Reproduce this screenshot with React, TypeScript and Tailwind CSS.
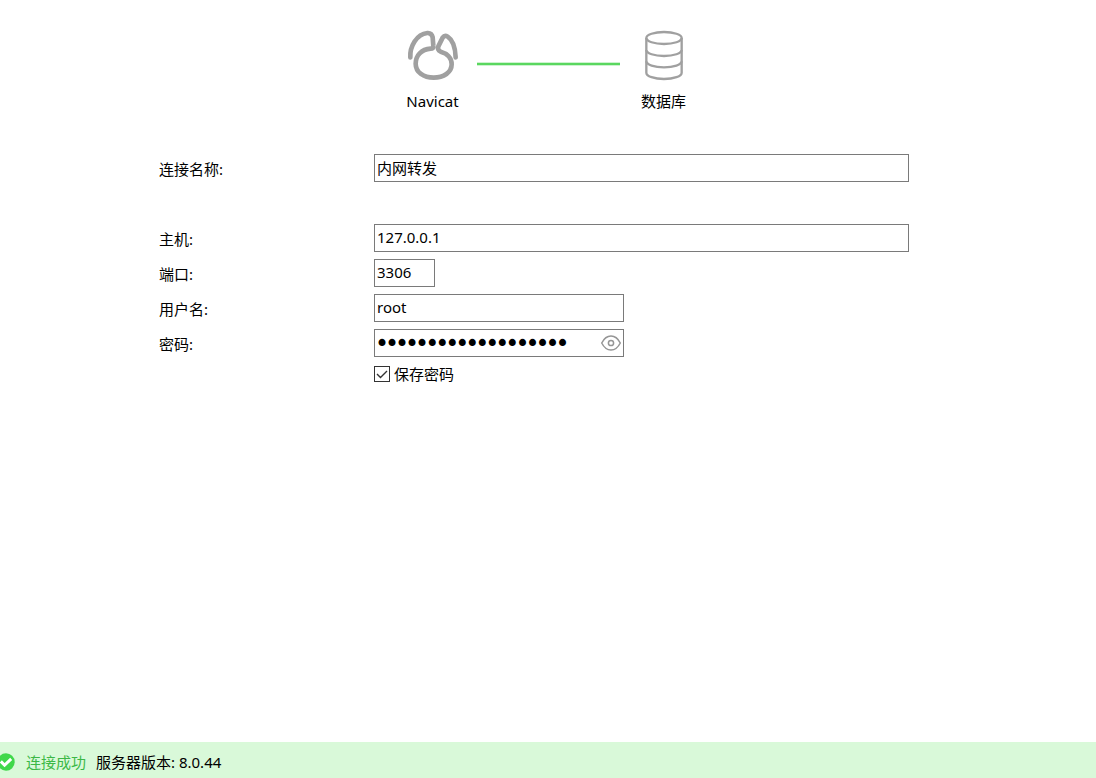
import React, { useState } from "react";

interface ConnectionData {
  nombre: string;
  host: string;
  puerto: string;
  usuario: string;
  password: string;
}

const NavicatIcon: React.FC = () => (
  <svg
    viewBox="30 27 162 162"
    className="h-[54px] w-[54px]"
    fill="none"
    stroke="#a0a0a0"
    strokeWidth="14"
    strokeLinecap="round"
    strokeLinejoin="round"
    aria-hidden="true"
  >
    <path d="M43 112C41 80 62 42 94 39Q107 38 110 52L112 78Q113 86 104 86C76 88 59 106 59 131C59 157 83 173 113 173C143 173 167 157 167 133C167 113 152 100 134 95Q123 90 127 79L140 53Q146 44 155 50C172 61 178 85 179 112" />
  </svg>
);

const DatabaseIcon: React.FC = () => (
  <svg viewBox="82 27 162 162" className="h-[54px] w-[54px]" fill="none" stroke="#a0a0a0" strokeWidth="7" aria-hidden="true">
    <ellipse cx="163" cy="54" rx="53" ry="18" />
    <path d="M110 54V158C110 169 134 177 163 177S216 169 216 158V54" />
    <path d="M110 90C110 100 134 108 163 108S216 100 216 90" />
    <path d="M110 124C110 134 134 142 163 142S216 134 216 124" />
  </svg>
);

const EyeIcon: React.FC = () => (
  <svg viewBox="0 0 20 16" className="h-4 w-5" fill="none" stroke="#959595" strokeWidth="1.5" aria-hidden="true">
    <path d="M0.7 8C3 3.5 6 1 10 1S17 3.5 19.3 8C17 12.5 14 15 10 15S3 12.5 0.7 8Z" />
    <circle cx="10" cy="8" r="2.6" />
  </svg>
);

const inputClass = "h-7 border border-[#7a7a7a] bg-white px-[2px] pb-[2px] outline-none";
const labelClass = "flex h-7 items-center pt-[2px]";

export default function App() {
  const [formData, setFormData] = useState<ConnectionData>({
    nombre: "内网转发",
    host: "127.0.0.1",
    puerto: "3306",
    usuario: "root",
    password: "1234567890123456789",
  });
  const [savePassword, setSavePassword] = useState(true);
  const [showPassword, setShowPassword] = useState(false);

  const handleChange = (event: React.ChangeEvent<HTMLInputElement>) => {
    setFormData({ ...formData, [event.target.name]: event.target.value });
  };

  return (
    <div className="flex min-h-screen flex-col bg-white font-['Noto_Sans','Noto_Sans_CJK_SC',sans-serif] text-[15px] leading-6 text-black">
      <header className="flex justify-center gap-4 pt-[29px]">
        <div className="flex w-14 flex-col items-center gap-[6px]">
          <NavicatIcon />
          <span>Navicat</span>
        </div>
        <div className="mt-[33px] h-1 w-[143px] border-y border-[#cdf3cf] bg-[#5ad75f]" />
        <div className="flex w-14 flex-col items-center gap-[6px]">
          <DatabaseIcon />
          <span>数据库</span>
        </div>
      </header>

      <main className="flex-1 pt-[41px] pr-[187px] pl-[159px]">
        <form className="grid grid-cols-[215px_1fr] gap-y-[7px]" onSubmit={(e) => e.preventDefault()}>
          <label htmlFor="nombre" className={labelClass}>连接名称:</label>
          <input id="nombre" name="nombre" className={`${inputClass} mb-[35px] w-full`} value={formData.nombre} onChange={handleChange} />

          <label htmlFor="host" className={labelClass}>主机:</label>
          <input id="host" name="host" className={`${inputClass} w-full`} value={formData.host} onChange={handleChange} />

          <label htmlFor="puerto" className={labelClass}>端口:</label>
          <input id="puerto" name="puerto" className={`${inputClass} w-[61px]`} value={formData.puerto} onChange={handleChange} />

          <label htmlFor="usuario" className={labelClass}>用户名:</label>
          <input id="usuario" name="usuario" className={`${inputClass} w-[250px]`} value={formData.usuario} onChange={handleChange} />

          <label htmlFor="password" className={labelClass}>密码:</label>
          <div className="flex h-7 w-[250px] items-center border border-[#7a7a7a] pr-[2px]">
            <input
              id="password"
              name="password"
              type={showPassword ? "text" : "password"}
              className="min-w-0 flex-1 bg-white pl-[2px] font-['DejaVu_Sans',sans-serif] text-[17px] outline-none [-webkit-text-stroke:2px_black]"
              value={formData.password}
              onChange={handleChange}
            />
            <button type="button" aria-label="显示密码" onClick={() => setShowPassword(!showPassword)}>
              <EyeIcon />
            </button>
          </div>

          <label className="col-start-2 flex items-center gap-1 leading-5">
            <span className="relative flex h-4 w-4">
              <input
                type="checkbox"
                className="h-4 w-4 appearance-none border border-[#333333] bg-white"
                checked={savePassword}
                onChange={(e) => setSavePassword(e.target.checked)}
              />
              {savePassword && (
                <svg viewBox="0 0 16 16" className="pointer-events-none absolute inset-0" fill="none" stroke="#333333" strokeWidth="1.4" aria-hidden="true">
                  <path d="M3 8L6.5 11.5L13 5" />
                </svg>
              )}
            </span>
            保存密码
          </label>
        </form>
      </main>

      <footer className="flex h-9 items-center bg-[#d9f9d9] pt-1">
        <svg viewBox="0 0 18 18" className="-ml-[3px] h-[18px] w-[18px]" aria-hidden="true">
          <circle cx="9" cy="9" r="8.7" fill="#3fd84a" />
          <path d="M3.8 8.4L7.6 12.2L14.2 5.8" fill="none" stroke="#ffffff" strokeWidth="3" />
        </svg>
        <span className="ml-[11px] text-[#3cb846]">连接成功</span>
        <span className="ml-[10px]">服务器版本: 8.0.44</span>
      </footer>
    </div>
  );
}
